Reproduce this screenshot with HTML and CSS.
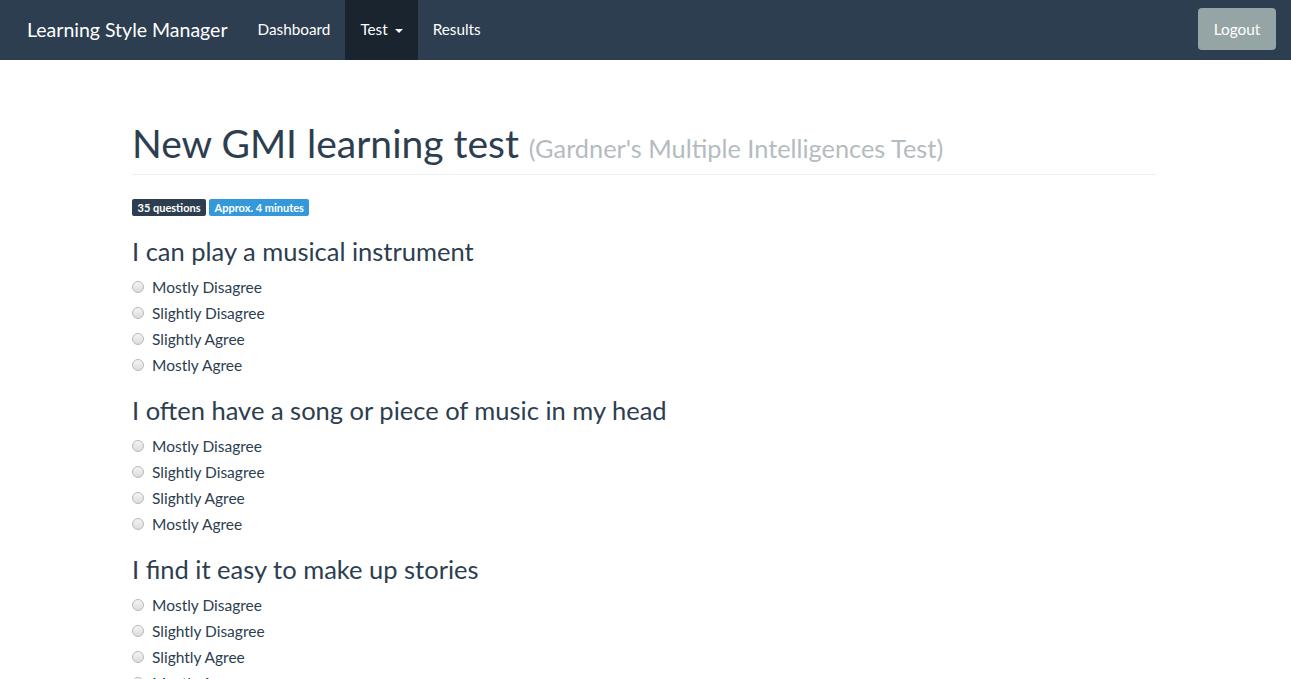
FILE: index.html
```html
<!DOCTYPE html>
<html>
<head>
<meta charset="utf-8">
<link rel="stylesheet" href="styles.css">
</head>
<body>
<nav class="navbar">
  <div class="nav-left">
    <a class="brand">Learning Style Manager</a>
    <a class="nav-link">Dashboard</a>
    <a class="nav-link active">Test <span class="caret"></span></a>
    <a class="nav-link">Results</a>
  </div>
  <button class="btn-logout">Logout</button>
</nav>
<div class="container">
  <div class="page-header">
    <h1>New GMI learning test <small>(Gardner's Multiple Intelligences Test)</small></h1>
  </div>
  <div class="labels">
    <span class="label label-dark">35 questions</span>
    <span class="label label-info">Approx. 4 minutes</span>
  </div>

  <div class="question first">
    <h3>I can play a musical instrument</h3>
    <label class="radio"><input type="radio" name="q1"> Mostly Disagree</label>
    <label class="radio"><input type="radio" name="q1"> Slightly Disagree</label>
    <label class="radio"><input type="radio" name="q1"> Slightly Agree</label>
    <label class="radio"><input type="radio" name="q1"> Mostly Agree</label>
  </div>
  <div class="question">
    <h3>I often have a song or piece of music in my head</h3>
    <label class="radio"><input type="radio" name="q2"> Mostly Disagree</label>
    <label class="radio"><input type="radio" name="q2"> Slightly Disagree</label>
    <label class="radio"><input type="radio" name="q2"> Slightly Agree</label>
    <label class="radio"><input type="radio" name="q2"> Mostly Agree</label>
  </div>
  <div class="question">
    <h3>I find it easy to make up stories</h3>
    <label class="radio"><input type="radio" name="q3"> Mostly Disagree</label>
    <label class="radio"><input type="radio" name="q3"> Slightly Disagree</label>
    <label class="radio"><input type="radio" name="q3"> Slightly Agree</label>
    <label class="radio"><input type="radio" name="q3"> Mostly Agree</label>
  </div>
</div>
</body>
</html>
```

FILE: styles.css
```css
html, body {
  margin: 0;
  padding: 0;
}
body {
  font-family: Lato, "Open Sans", sans-serif;
  font-size: 15px;
  line-height: 1.42857;
  color: #2c3e50;
  background: #fff;
  overflow: hidden;
}
.navbar {
  height: 60px;
  background: #2c3e50;
  display: flex;
  justify-content: space-between;
  align-items: flex-start;
  padding: 0 15px 0 12px;
}
.nav-left {
  display: flex;
  height: 60px;
  align-items: stretch;
}
.brand {
  font-size: 19.5px;
  line-height: 21px;
  padding: 19px 15px 20px;
  color: #fff;
}
.nav-link {
  font-size: 15.3px;
  line-height: 20px;
  padding: 19px 15px 21px;
  color: #fff;
}
.nav-link.active {
  background: #1a242f;
}
.caret {
  display: inline-block;
  width: 0;
  height: 0;
  margin-left: 3px;
  vertical-align: middle;
  border-top: 4px solid #fff;
  border-left: 4px solid transparent;
  border-right: 4px solid transparent;
}
.btn-logout {
  margin-top: 8px;
  font-family: Lato, "Open Sans", sans-serif;
  font-size: 15.3px;
  line-height: 20px;
  color: #fff;
  background: #95a5a6;
  border: none;
  border-radius: 4px;
  padding: 0;
  width: 78px;
  height: 42px;
}
.container {
  width: 1027px;
  box-sizing: border-box;
  padding-right: 3px;
  margin: 0 auto;
}
.page-header {
  margin-top: 62px;
  border-bottom: 1px solid #ecf0f1;
  padding-bottom: 9px;
}
h1 {
  margin: 0;
  height: 43px;
  font-size: 39px;
  font-weight: 400;
  line-height: 43px;
  white-space: nowrap;
}
h1 small {
  font-size: 65%;
  line-height: 0;
  color: #b4bcc2;
  font-weight: 400;
}
.labels {
  margin-top: 24px;
  display: flex;
  gap: 3px;
}
.label {
  font-size: 11px;
  font-weight: 700;
  line-height: 1;
  color: #fff;
  padding: 3px 5.5px 3px;
  border-radius: 2px;
}
.label-dark { background: #2c3e50; }
.label-info { background: #3498db; }
.question h3 {
  font-size: 25.5px;
  font-weight: 400;
  line-height: 29px;
  margin: 18px 0 8px;
}
.question.first h3 {
  margin-top: 21px;
}
.radio {
  display: flex;
  align-items: center;
  height: 26px;
  font-size: 15.5px;
}
.radio input {
  margin: 0 8px 0 0;
  width: 12px;
  height: 12px;
  appearance: none;
  -webkit-appearance: none;
  border-radius: 50%;
  border: 1px solid #b9b9b9;
  background: linear-gradient(#f4f4f4, #dcdcdc);
  box-sizing: border-box;
  flex: none;
}
```
